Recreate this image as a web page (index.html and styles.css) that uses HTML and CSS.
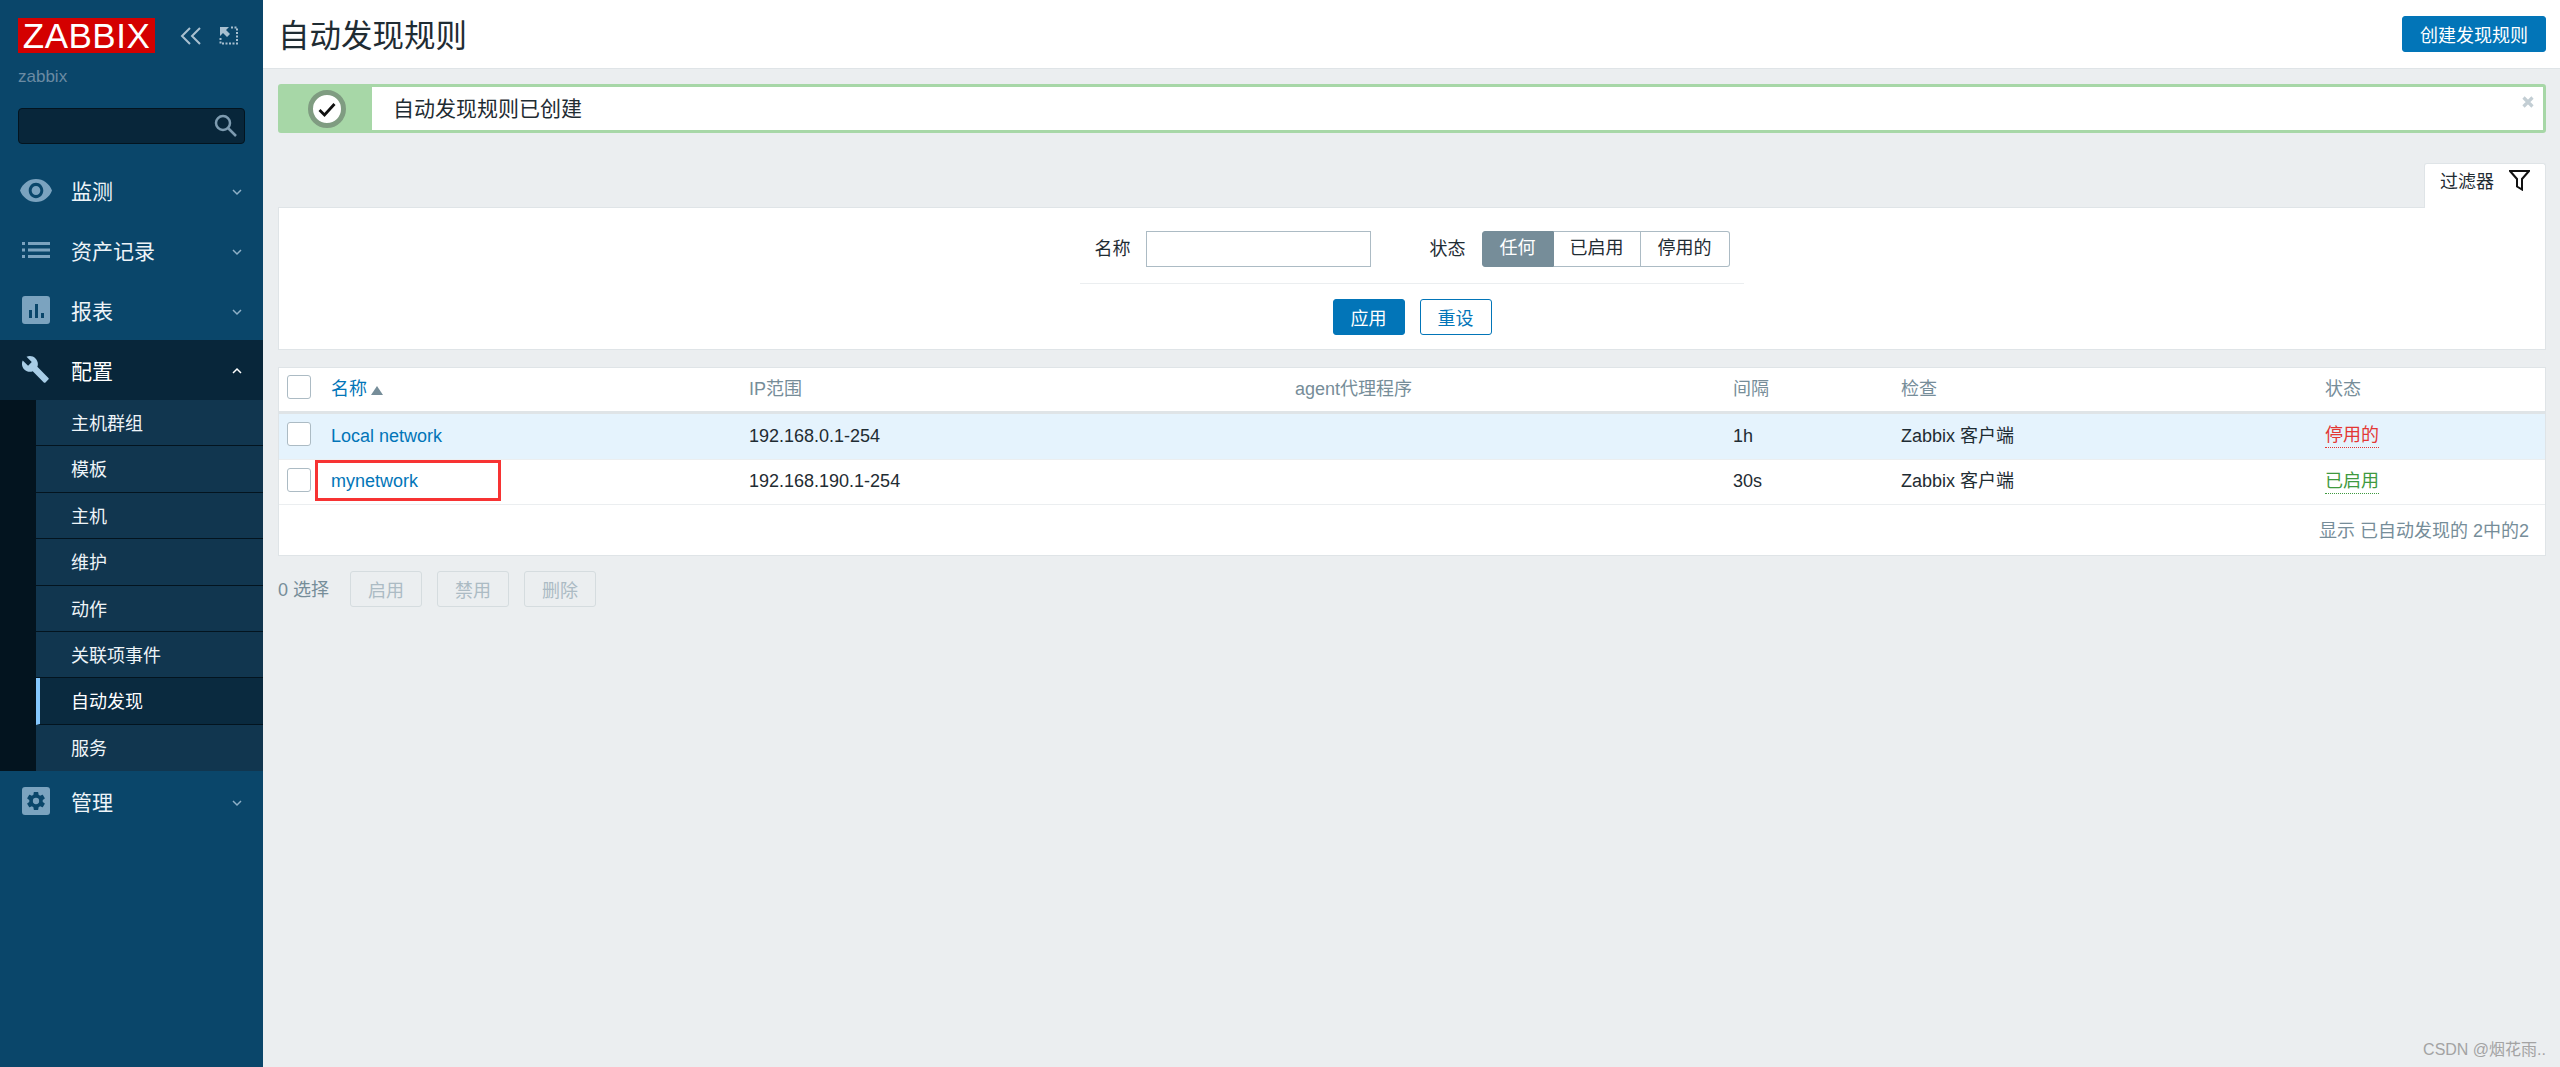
FILE: index.html
```html
<!DOCTYPE html>
<html lang="zh-CN">
<head>
    <meta charset="UTF-8">
    <meta name="viewport" content="width=device-width, initial-scale=1.0">
    <title>自动发现规则</title>
    <link rel="stylesheet" href="styles.css">
</head>
<body>
    <aside class="sidebar">
        <div class="brand">
            <span class="logo">ZABBIX</span>
            <svg class="brand-btn" width="22" height="20" viewBox="0 0 22 20"><path d="M10 2 2 10l8 8M20 2l-8 8 8 8" fill="none" stroke="#a9c0d0" stroke-width="2"/></svg>
            <svg class="brand-btn" width="19" height="19" viewBox="0 0 19 19"><path d="M1 1h9L7 4l4 4-3 3-4-4-3 3z" fill="#a9c0d0"/><path d="M12 1.500h6v16H1.500v-6" fill="none" stroke="#a9c0d0" stroke-width="2" stroke-dasharray="2 1.500"/></svg>
        </div>
        <div class="server-name">zabbix</div>
        <div class="search">
            <svg width="23" height="24" viewBox="0 0 23 24"><circle cx="9" cy="9" r="7" fill="none" stroke="#7d9bb0" stroke-width="2.500"/><path d="m14 14 8 8" stroke="#7d9bb0" stroke-width="2.500"/></svg>
        </div>
        <nav class="menu">
            <div class="menu-item">
                <svg class="menu-icon" viewBox="1 4.500 22 15" preserveAspectRatio="none"><path d="M12 4.500C7 4.500 2.730 7.610 1 12c1.730 4.390 6 7.500 11 7.500s9.270-3.110 11-7.500c-1.730-4.390-6-7.500-11-7.500zM12 17c-2.760 0-5-2.240-5-5s2.240-5 5-5 5 2.240 5 5-2.240 5-5 5zm0-8c-1.660 0-3 1.340-3 3s1.340 3 3 3 3-1.340 3-3-1.340-3-3-3z"/></svg>
                <span class="menu-label">监测</span>
                <svg class="chevron" width="10" height="7" viewBox="0 0 10 7"><path d="m1 1 4 4 4-4"/></svg>
            </div>
            <div class="menu-item">
                <svg class="menu-icon" viewBox="0 0 28 16"><path d="M0 0h3v3H0zM0 6.500h3v3H0zM0 13h3v3H0zM6 0h22v3H6zM6 6.500h22v3H6zM6 13h22v3H6z"/></svg>
                <span class="menu-label">资产记录</span>
                <svg class="chevron" width="10" height="7" viewBox="0 0 10 7"><path d="m1 1 4 4 4-4"/></svg>
            </div>
            <div class="menu-item">
                <svg class="menu-icon" viewBox="0 0 28 28"><path fill-rule="evenodd" d="M3 0h22a3 3 0 0 1 3 3v22a3 3 0 0 1-3 3H3a3 3 0 0 1-3-3V3a3 3 0 0 1 3-3zM7 14v8h3v-8zM13 8v14h3V8zM19 17v5h3v-5z"/></svg>
                <span class="menu-label">报表</span>
                <svg class="chevron" width="10" height="7" viewBox="0 0 10 7"><path d="m1 1 4 4 4-4"/></svg>
            </div>
            <div class="menu-item open">
                <svg class="menu-icon" viewBox="1 1 23 23"><path d="M22.700 19l-9.100-9.100c.9-2.300.4-5-1.500-6.900-2-2-5-2.400-7.400-1.300L9 6 6 9 1.600 4.700C.4 7.100.9 10.100 2.900 12.100c1.900 1.900 4.600 2.400 6.900 1.500l9.100 9.100c.4.4 1 .4 1.400 0l2.300-2.300c.5-.4.5-1.100.1-1.400z"/></svg>
                <span class="menu-label">配置</span>
                <svg class="chevron up" width="10" height="7" viewBox="0 0 10 7"><path d="m1 6 4-4 4 4"/></svg>
            </div>
            <ul class="submenu">
                <li>主机群组</li>
                <li>模板</li>
                <li>主机</li>
                <li>维护</li>
                <li>动作</li>
                <li>关联项事件</li>
                <li class="selected">自动发现</li>
                <li>服务</li>
            </ul>
            <div class="menu-item">
                <svg class="menu-icon" viewBox="0 0 28 28"><rect width="28" height="28" rx="3"/><path transform="translate(3.200 3.200) scale(.9)" fill="#0a466a" fill-rule="evenodd" d="M19.430 12.980c.04-.32.07-.64.07-.98s-.03-.66-.07-.98l2.110-1.650c.19-.15.24-.42.12-.64l-2-3.460c-.12-.22-.39-.3-.61-.22l-2.490 1c-.52-.4-1.080-.73-1.690-.98l-.38-2.650C14.460 2.180 14.250 2 14 2h-4c-.25 0-.46.18-.49.420l-.38 2.650c-.61.25-1.170.59-1.690.98l-2.490-1c-.23-.09-.49 0-.61.220l-2 3.460c-.13.220-.07.490.12.640l2.110 1.650c-.04.320-.07.650-.07.980s.03.660.07.980l-2.110 1.650c-.19.150-.24.420-.12.640l2 3.460c.12.220.39.300.61.220l2.490-1c.52.400 1.080.730 1.690.980l.38 2.650c.03.240.24.420.49.420h4c.25 0 .46-.18.49-.42l.38-2.650c.61-.25 1.170-.59 1.690-.98l2.490 1c.23.090.49 0 .61-.22l2-3.460c.12-.22.07-.49-.12-.64zM12 15.500a3.500 3.500 0 1 1 0-7 3.500 3.500 0 0 1 0 7z"/></svg>
                <span class="menu-label">管理</span>
                <svg class="chevron" width="10" height="7" viewBox="0 0 10 7"><path d="m1 1 4 4 4-4"/></svg>
            </div>
        </nav>
    </aside>

    <div class="main">
        <header class="page-header">
            <h1>自动发现规则</h1>
            <button class="btn create-btn">创建发现规则</button>
        </header>

        <div class="content">
            <div class="msg-good">
                <div class="msg-icon">
                    <svg width="38" height="38" viewBox="0 0 38 38"><circle cx="19" cy="19" r="16.500" fill="#fff" stroke="#7f9c81" stroke-width="5"/><path d="m11.500 20 5 5 10-11" fill="none" stroke="#111" stroke-width="2.800"/></svg>
                </div>
                <div class="msg-text">自动发现规则已创建</div>
                <svg class="msg-close" width="12" height="12" viewBox="0 0 12 12"><path d="m1.500 1.500 9 9m0-9-9 9" stroke="#c3ced4" stroke-width="3.200"/></svg>
            </div>

            <div class="filter-tabs">
                <div class="filter-tab">
                    <span>过滤器</span>
                    <svg width="21" height="21" viewBox="0 0 21 21"><path d="M1 1h19l-7 8v10.500l-5-3V9z" fill="none" stroke="#111" stroke-width="2"/></svg>
                </div>
            </div>
            <form class="filter">
                <div class="filter-row">
                    <label>名称</label>
                    <input class="name-input" type="text">
                    <label class="status-label">状态</label>
                    <div class="segmented">
                        <span class="seg seg-first on">任何</span>
                        <span class="seg seg-mid">已启用</span>
                        <span class="seg seg-last">停用的</span>
                    </div>
                </div>
                <div class="filter-buttons">
                    <button class="btn small" type="button">应用</button>
                    <button class="btn small outline" type="button">重设</button>
                </div>
            </form>

            <div class="list">
                <table>
                    <colgroup>
                        <col class="c-check"><col class="c-name"><col class="c-ip"><col class="c-proxy"><col class="c-delay"><col class="c-checks"><col>
                    </colgroup>
                    <thead>
                        <tr>
                            <th><span class="checkbox"></span></th>
                            <th class="sorted">名称<span class="arrow-up"></span></th>
                            <th>IP范围</th>
                            <th>agent代理程序</th>
                            <th>间隔</th>
                            <th>检查</th>
                            <th>状态</th>
                        </tr>
                    </thead>
                    <tbody>
                        <tr class="row-hl">
                            <td><span class="checkbox"></span></td>
                            <td><a>Local network</a></td>
                            <td>192.168.0.1-254</td>
                            <td></td>
                            <td>1h</td>
                            <td>Zabbix 客户端</td>
                            <td><span class="state red">停用的</span></td>
                        </tr>
                        <tr>
                            <td><span class="checkbox"></span></td>
                            <td class="marked"><a>mynetwork</a><span class="mark-box"></span></td>
                            <td>192.168.190.1-254</td>
                            <td></td>
                            <td>30s</td>
                            <td>Zabbix 客户端</td>
                            <td><span class="state green">已启用</span></td>
                        </tr>
                    </tbody>
                </table>
                <div class="list-footer">显示 已自动发现的 2中的2</div>
            </div>

            <div class="actions">
                <span class="selected-count">0 选择</span>
                <button class="btn small off" type="button">启用</button>
                <button class="btn small off" type="button">禁用</button>
                <button class="btn small off" type="button">删除</button>
            </div>
        </div>
        <div class="watermark">CSDN @烟花雨..</div>
    </div>
</body>
</html>
```

FILE: styles.css
```css
* {
    box-sizing: border-box;
}
html, body {
    height: 100%;
}
body {
    margin: 0;
    display: flex;
    height: 1067px;
    overflow: hidden;
    font-family: "Liberation Sans", "Noto Sans CJK SC", sans-serif;
    font-size: 18px;
    line-height: 24px;
    color: #1f2c33;
    background-color: #ebeef0;
}

/* sidebar */
.sidebar {
    width: 263px;
    flex-shrink: 0;
    background-color: #0a466a;
    padding-top: 18px;
}
.brand {
    display: flex;
    align-items: center;
    height: 35px;
    padding-left: 18px;
}
.logo {
    width: 137px;
    height: 35px;
    line-height: 36px;
    background-color: #d40000;
    color: #fff;
    font-size: 35px;
    text-align: center;
    letter-spacing: .5px;
}
.brand-btn:first-of-type {
    margin-left: 25px;
}
.brand-btn:last-of-type {
    margin-left: 17px;
}
.server-name {
    margin: 14px 0 0 18px;
    height: 20px;
    line-height: 20px;
    font-size: 17px;
    color: #6a8ba3;
}
.search {
    margin: 21px 0 0 18px;
    width: 227px;
    height: 36px;
    display: flex;
    align-items: center;
    justify-content: flex-end;
    padding-right: 7px;
    background-color: #08263a;
    border: 1px solid #03141f;
    border-radius: 4px;
}
.menu {
    margin-top: 16px;
}
.menu-item {
    display: flex;
    align-items: center;
    height: 60px;
    padding-left: 22px;
    color: #eef4f8;
}
.menu-item.open {
    background-color: #08263a;
    color: #fff;
}
.menu-icon {
    width: 28px;
    height: 28px;
    fill: #7ba3bf;
}
.menu-item:first-child .menu-icon {
    width: 32px;
    height: 23px;
    margin-left: -2px;
    margin-right: -2px;
}
.menu-item:nth-child(2) .menu-icon {
    height: 16px;
}
.menu-item.open .menu-icon {
    fill: #a8cde6;
}
.menu-label {
    margin-left: 21px;
    padding-top: 3px;
    flex: 1;
    font-size: 21px;
}
.chevron {
    margin-right: 21px;
    margin-top: 5px;
    fill: none;
    stroke: #8fb0c7;
    stroke-width: 1.500;
}
.chevron.up {
    margin-top: 0;
}
.menu-item.open .chevron {
    stroke: #fff;
}
.submenu {
    margin: 0;
    padding: 0 0 0 36px;
    list-style: none;
    background-color: #03141f;
}
.submenu li {
    height: 46.400px;
    line-height: 48px;
    padding-left: 35px;
    background-color: #11364f;
    border-bottom: 1.500px solid #03141f;
    color: #eef4f8;
}
.submenu li:last-child {
    border-bottom: 0;
}
.submenu li.selected {
    background-color: #0a2a3f;
    border-left: 4px solid #84c8ff;
    padding-left: 31px;
    color: #fff;
}

/* page header */
.main {
    flex: 1;
    min-width: 0;
    position: relative;
}
.page-header {
    display: flex;
    align-items: center;
    justify-content: space-between;
    height: 69px;
    padding: 0 14px 0 15px;
    background-color: #fff;
    border-bottom: 1px solid #dfe4e7;
}
h1 {
    margin: 0;
    padding-top: 3px;
    font-size: 31.500px;
    line-height: 40px;
    font-weight: normal;
    color: #1f2c33;
}
.btn {
    height: 36px;
    padding: 0;
    font-family: inherit;
    font-size: 18px;
    color: #fff;
    background-color: #0275b8;
    border: 1px solid #0275b8;
    border-radius: 3px;
}
.create-btn {
    width: 144px;
    margin-bottom: 1px;
}
.btn.small {
    width: 72px;
}
.btn.outline {
    color: #0275b8;
    background-color: #fff;
}
.btn.off {
    color: #acbbc4;
    background-color: #ebeef0;
    border-color: #d5dcdf;
}

.content {
    padding: 15px 14px 0 15px;
}

/* success message */
.msg-good {
    position: relative;
    display: flex;
    height: 49px;
    background-color: #fff;
    border: 3px solid #a7d7a7;
    border-radius: 3px;
}
.msg-icon {
    width: 91px;
    flex-shrink: 0;
    display: flex;
    align-items: center;
    justify-content: center;
    background-color: #a7d7a7;
}
.msg-text {
    margin-left: 21px;
    font-size: 21px;
    line-height: 43px;
}
.msg-close {
    position: absolute;
    top: 9px;
    right: 9px;
}

/* filter */
.filter-tabs {
    display: flex;
    justify-content: flex-end;
    margin-top: 30px;
}
.filter-tab {
    width: 122px;
    height: 45px;
    display: flex;
    justify-content: space-between;
    padding: 6px 15px 0 15px;
    background-color: #fff;
    border: 1px solid #dfe4e7;
    border-bottom: 0;
    border-radius: 3px 3px 0 0;
    position: relative;
    z-index: 1;
    margin-bottom: -1px;
}
.filter {
    height: 143px;
    padding-top: 23px;
    background-color: #fff;
    border: 1px solid #dfe4e7;
}
.filter-row {
    display: flex;
    align-items: center;
    justify-content: center;
    width: 664px;
    height: 53px;
    margin: 0 auto;
    padding-bottom: 16px;
    border-bottom: 1px solid #ebeef0;
}
.filter-row label {
    margin-right: 15px;
}
.name-input {
    width: 225px;
    height: 36px;
    background-color: #fff;
    border: 1px solid #acbbc4;
}
.filter-row .status-label {
    margin-left: 59px;
    margin-right: 16px;
}
.segmented {
    display: flex;
    height: 36px;
}
.seg {
    height: 36px;
    line-height: 33px;
    text-align: center;
    border: 1px solid #acbbc4;
    border-left: 0;
}
.seg-first {
    width: 72px;
    border-left: 1px solid #768d99;
    border-color: #768d99;
    border-radius: 3px 0 0 3px;
    background-color: #768d99;
    color: #fff;
}
.seg-mid {
    width: 87px;
}
.seg-last {
    width: 89px;
    border-radius: 0 3px 3px 0;
}
.filter-buttons {
    display: flex;
    justify-content: center;
    gap: 15px;
    margin-top: 15px;
}

/* discovery rules table */
.list {
    margin-top: 17px;
    height: 189px;
    background-color: #fff;
    border: 1px solid #dfe4e7;
}
table {
    width: 100%;
    border-collapse: separate;
    border-spacing: 0;
    table-layout: fixed;
}
.c-check { width: 52px; }
.c-name { width: 418px; }
.c-ip { width: 546px; }
.c-proxy { width: 438px; }
.c-delay { width: 168px; }
.c-checks { width: 424px; }
th, td {
    padding: 0;
    text-align: left;
    font-weight: normal;
}
th {
    height: 46px;
    padding-bottom: 2px;
    color: #768d99;
    border-bottom: 3px solid #dfe4e7;
}
th.sorted {
    color: #0275b8;
}
td {
    height: 46px;
    padding-bottom: 2px;
    border-bottom: 1px solid #ebeef0;
}
th:first-child, td:first-child {
    padding-left: 8px;
}
tbody tr:last-child td {
    height: 45px;
}
.row-hl td {
    background-color: #e5f3fd;
}
.checkbox {
    display: block;
    width: 24px;
    height: 24px;
    margin-bottom: 3px;
    background-color: #fff;
    border: 1px solid #acbbc4;
    border-radius: 3px;
}
.arrow-up {
    display: inline-block;
    margin-left: 4px;
    border-left: 6px solid transparent;
    border-right: 6px solid transparent;
    border-bottom: 9px solid #768d99;
}
a {
    color: #0275b8;
}
.state {
    display: inline-block;
    line-height: 23px;
    border-bottom: 1px dotted;
}
.red {
    color: #e33734;
}
.green {
    color: #3f9a3f;
}
.marked {
    position: relative;
}
.mark-box {
    position: absolute;
    left: -16px;
    top: 0;
    width: 186px;
    height: 41px;
    border: 3px solid #f73333;
}
.list-footer {
    padding: 14px 16px 0 0;
    text-align: right;
    color: #768d99;
}

/* bulk actions */
.actions {
    display: flex;
    align-items: center;
    gap: 15px;
    margin-top: 15px;
}
.selected-count {
    width: 57px;
    padding-top: 1px;
    color: #768d99;
}

.watermark {
    position: absolute;
    right: 14px;
    bottom: 5px;
    font-size: 16px;
    color: #a3a3a3;
}
```
